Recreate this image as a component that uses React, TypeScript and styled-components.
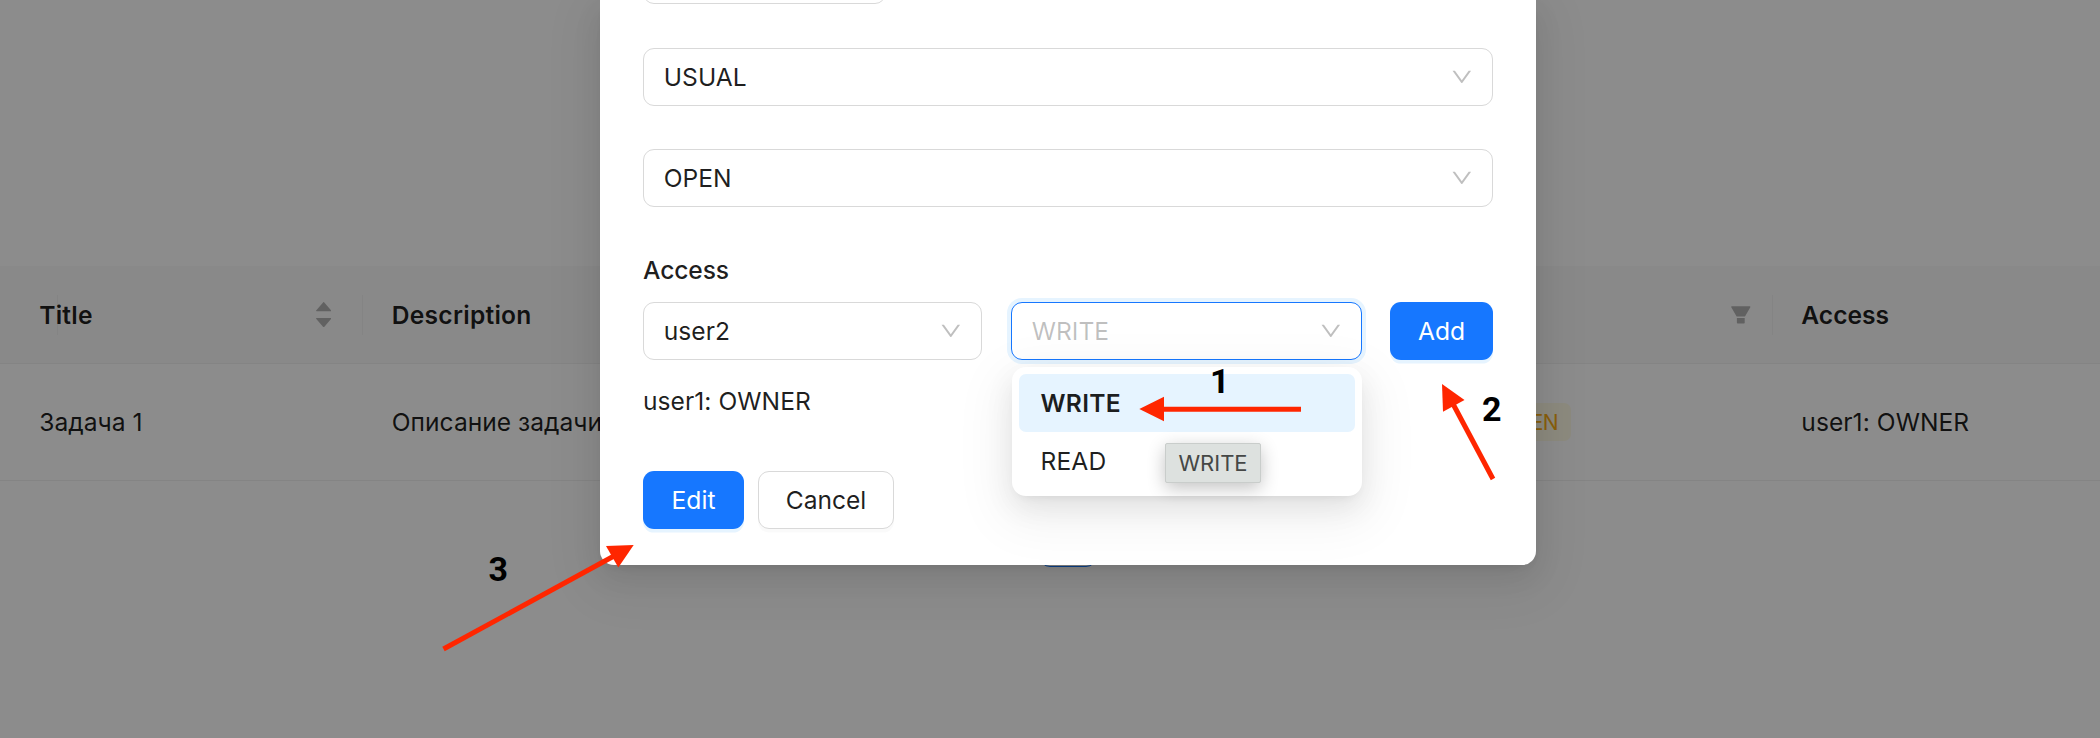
import React from "react";
import styled, { createGlobalStyle, css } from "styled-components";

const Global = createGlobalStyle`
  * { box-sizing: border-box; }
  html, body { margin: 0; background: #fff; }
  body { font-family: Inter, "Noto Sans", sans-serif; font-size: 24.6px; line-height: 39.6px; color: rgba(0, 0, 0, 0.88); }
`;

const Page = styled.div`
  position: relative;
  width: 2100px;
  height: 738px;
  overflow: hidden;
  background: #fff;
`;

const Table = styled.div`
  padding-top: 266px;
`;

const Row = styled.div<{ $head?: boolean }>`
  display: grid;
  grid-template-columns: 10.5px 352.5px 1098px 311.5px 1fr;
  align-items: center;
  height: ${(p) => (p.$head ? 98 : 117)}px;
  border-bottom: 1px solid #f0f0f0;
  ${(p) => p.$head && css`background: #fafafa; font-weight: 600;`}
`;

const Cell = styled.div<{ $divider?: boolean; $end?: number }>`
  display: flex;
  align-items: center;
  justify-content: space-between;
  height: 40px;
  padding: 0 ${(p) => p.$end ?? 28}px 0 28.8px;
  white-space: nowrap;
  border-right: 1px solid ${(p) => (p.$divider ? "#f0f0f0" : "transparent")};
`;

const Text = styled.span<{ $track?: number }>`
  padding-top: 2px;
  letter-spacing: ${(p) => p.$track ?? 0}px;
  white-space: nowrap;
`;

const Sorter = styled.span`
  display: flex;
  flex-direction: column;
  gap: 6px;
  svg { display: block; fill: rgba(0, 0, 0, 0.29); }
`;

const FilterIcon = styled.svg`
  fill: rgba(0, 0, 0, 0.29);
`;

const Tag = styled.span`
  height: 38px;
  line-height: 40px;
  padding: 0 12.6px;
  border-radius: 7px;
  background: #fffbe6;
  color: #faad14;
  font-size: 21px;
  letter-spacing: -0.6px;
`;

const Pagination = styled.div`
  display: flex;
  padding: 29px 0 0 1039px;
`;

const PageItem = styled.div`
  width: 58px;
  height: 57px;
  border: 1px solid #1677ff;
  border-radius: 11px;
`;

const Mask = styled.div`
  position: absolute;
  inset: 0;
  padding-left: 600px;
  background: rgba(0, 0, 0, 0.45);
`;

const Modal = styled.div`
  width: 936px;
  height: 565px;
  padding: 0 43px;
  border-radius: 0 0 14px 14px;
  background: #fff;
  box-shadow: 0 11px 29px rgba(0, 0, 0, 0.08), 0 5px 11px -7px rgba(0, 0, 0, 0.12), 0 16px 50px 14px rgba(0, 0, 0, 0.05);
`;

const InputEdge = styled.div`
  width: 243px;
  height: 4px;
  overflow: hidden;
  display: flex;
  align-items: flex-end;
  &::after {
    content: "";
    flex: 1;
    height: 58px;
    border: 1px solid #d9d9d9;
    border-radius: 11px;
  }
`;

const Select = styled.div<{ $width: number; $top?: number; $active?: boolean }>`
  display: flex;
  align-items: center;
  justify-content: space-between;
  width: ${(p) => p.$width}px;
  height: 58px;
  margin-top: ${(p) => p.$top ?? 0}px;
  padding: 0 19px 0 19.8px;
  border: 1px solid ${(p) => (p.$active ? "#1677ff" : "#d9d9d9")};
  border-radius: 11px;
  background: #fff;
  ${(p) => p.$active && css`color: rgba(0, 0, 0, 0.25); box-shadow: 0 0 0 4px #e6f4ff;`}
`;

const Chevron = styled.svg`
  fill: rgba(0, 0, 0, 0.25);
`;

const Label = styled.div`
  margin-top: 44px;
  height: 40px;
  font-weight: 500;
`;

const AccessRow = styled.div`
  display: flex;
  margin-top: 11px;
`;

const Holder = styled.div`
  position: relative;
  margin: 0 28px 0 29px;
`;

const Dropdown = styled.div`
  position: absolute;
  top: 65px;
  left: 1px;
  width: 350px;
  height: 129px;
  padding: 7px;
  border-radius: 14px;
  background: #fff;
  box-shadow: 0 11px 29px rgba(0, 0, 0, 0.08), 0 5px 11px -7px rgba(0, 0, 0, 0.12), 0 16px 50px 14px rgba(0, 0, 0, 0.05);
`;

const Option = styled.div<{ $selected?: boolean }>`
  height: 58px;
  padding: 10px 21.5px 8px;
  border-radius: 7px;
  ${(p) => p.$selected && css`background: #e6f4ff; font-weight: 600;`}
`;

const Tooltip = styled.div`
  position: absolute;
  top: 76px;
  left: 153px;
  width: 96px;
  height: 40px;
  line-height: 38px;
  text-align: center;
  font-size: 22px;
  color: #454746;
  background: #dde1df;
  border: 1px solid #c9cdcb;
  border-radius: 2px;
  box-shadow: 0 5px 18px rgba(0, 0, 0, 0.24);
`;

const Button = styled.button<{ $primary?: boolean; $width: number }>`
  display: flex;
  align-items: center;
  justify-content: center;
  width: ${(p) => p.$width}px;
  height: 58px;
  padding: 0;
  border: ${(p) => (p.$primary ? "0" : "1px solid #d9d9d9")};
  border-radius: 11px;
  font: inherit;
  color: ${(p) => (p.$primary ? "#fff" : "rgba(0, 0, 0, 0.88)")};
  background: ${(p) => (p.$primary ? "#1677ff" : "#fff")};
  box-shadow: 0 3.6px 0 ${(p) => (p.$primary ? "rgba(5, 145, 255, 0.1)" : "rgba(0, 0, 0, 0.02)")};
`;

const Granted = styled.div`
  margin-top: 22px;
  height: 40px;
`;

const Actions = styled.div`
  display: flex;
  gap: 14px;
  margin-top: 49px;
`;

const Annotations = styled.svg`
  position: absolute;
  inset: 0;
  line { stroke: #ff2600; stroke-width: 5; }
  polygon { fill: #ff2600; }
  text { font: bold 34px Roboto, sans-serif; fill: #000; }
`;

const Down = () => (
  <Chevron width="21.6" height="21.6" viewBox="64 64 896 896">
    <path d="M884 256h-75c-5.1 0-9.9 2.5-12.9 6.6L512 654.2 227.9 262.6c-3-4.1-7.8-6.6-12.9-6.6h-75c-6.5 0-10.3 7.4-6.5 12.7l352.6 486.1c12.8 17.6 39 17.6 51.7 0l352.6-486.1c3.9-5.3.1-12.7-6.4-12.7z" />
  </Chevron>
);

const Caret = ({ down }: { down?: boolean }) => (
  <svg width="15.4" height="9.3" viewBox="160 300 704 424">
    <path
      transform={down ? "rotate(180 512 512)" : undefined}
      d="M858.9 689L530.5 308.2c-9.4-10.9-27.5-10.9-37 0L165.1 689c-12.2 14.2-1.2 35 18.5 35h656.8c19.7 0 30.7-20.8 18.5-35z"
    />
  </svg>
);

export default function App() {
  return (
    <Page>
      <Global />
      <Table>
        <Row $head>
          <Cell $divider />
          <Cell $divider $end={31}>
            <Text $track={0.2}>Title</Text>
            <Sorter>
              <Caret />
              <Caret down />
            </Sorter>
          </Cell>
          <Cell><Text $track={0.25}>Description</Text></Cell>
          <Cell $divider $end={19.5}>
            <span />
            <FilterIcon width="21.6" height="21.6" viewBox="64 64 896 896">
              <path d="M349 838c0 17.7 14.2 32 31.8 32h262.4c17.6 0 31.8-14.3 31.8-32V642H349v196zm531.1-684H143.9c-24.5 0-39.8 26.7-27.5 48l221.3 376h348.8l221.3-376c12.1-21.3-3.2-48-27.7-48z" />
            </FilterIcon>
          </Cell>
          <Cell><Text>Access</Text></Cell>
        </Row>
        <Row>
          <Cell />
          <Cell><Text>Задача 1</Text></Cell>
          <Cell><Text>Описание задачи</Text></Cell>
          <Cell><Tag>OPEN</Tag></Cell>
          <Cell><Text $track={0.05}>user1: OWNER</Text></Cell>
        </Row>
        <Pagination><PageItem /></Pagination>
      </Table>
      <Mask>
        <Modal>
          <InputEdge />
          <Select $width={850} $top={44}><Text>USUAL</Text><Down /></Select>
          <Select $width={850} $top={43}><Text>OPEN</Text><Down /></Select>
          <Label><Text $track={-0.1}>Access</Text></Label>
          <AccessRow>
            <Select $width={339}><Text>user2</Text><Down /></Select>
            <Holder>
              <Select $width={351} $active><Text>WRITE</Text><Down /></Select>
              <Dropdown>
                <Option $selected><Text $track={0.25}>WRITE</Text></Option>
                <Option><Text $track={0.1}>READ</Text></Option>
                <Tooltip><Text>WRITE</Text></Tooltip>
              </Dropdown>
            </Holder>
            <Button $primary $width={103}><Text>Add</Text></Button>
          </AccessRow>
          <Granted><Text $track={0.05}>user1: OWNER</Text></Granted>
          <Actions>
            <Button $primary $width={101}><Text>Edit</Text></Button>
            <Button $width={136}><Text>Cancel</Text></Button>
          </Actions>
        </Modal>
      </Mask>
      <Annotations width="2100" height="738">
        <line x1="1301" y1="409.3" x2="1160" y2="409.3" />
        <polygon points="1139.3,409 1164,396.7 1164,421.3" />
        <text x="1210" y="393">1</text>
        <line x1="1493" y1="479" x2="1452" y2="402" />
        <polygon points="1442,384 1464.5,400 1443,411.7" />
        <text x="1482" y="421">2</text>
        <line x1="443.5" y1="649" x2="614" y2="556" />
        <polygon points="633.7,545 606,546 618.3,567.5" />
        <text x="488.5" y="581">3</text>
      </Annotations>
    </Page>
  );
}
